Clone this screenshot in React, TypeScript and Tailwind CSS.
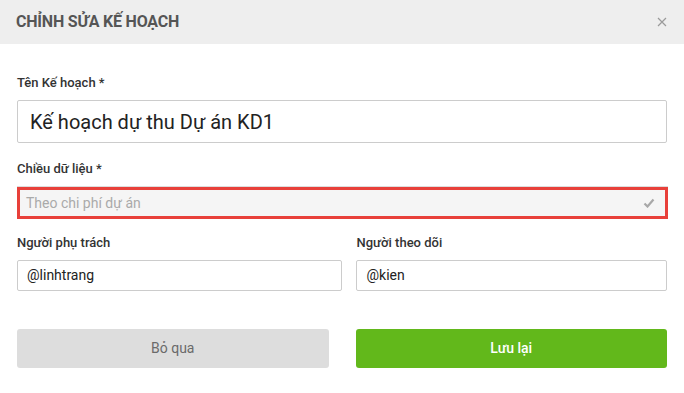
import React from "react";

export default function App() {
  return (
    <div className="w-[684px] h-[393px] bg-white overflow-hidden" style={{ fontFamily: "Roboto, 'Noto Sans', sans-serif" }}>
      <div className="h-[44px] bg-[#eeeeee] flex items-center justify-between pl-[16px] pr-[16px]">
        <div className="text-[16px] font-bold text-[#555555] tracking-[-0.2px]">CHỈNH SỬA KẾ HOẠCH</div>
        <svg width="10" height="10" viewBox="0 0 10 10" className="mr-[1px]">
          <path d="M1 1 L9 9 M9 1 L1 9" stroke="#9a9a9a" strokeWidth="1.2" />
        </svg>
      </div>
      <div className="px-[17px]">
        <div className="mt-[31px] text-[13px] leading-[16px] font-medium text-[#333333]">Tên Kế hoạch *</div>
        <div className="mt-[9px] h-[43px] w-[650px] border border-[#cccccc] rounded-[2px] flex items-center pl-[12px] text-[20px] text-[#222222]">
          Kế hoạch dự thu Dự án KD1
        </div>
        <div className="mt-[18px] text-[13px] leading-[16px] font-medium text-[#333333]">Chiều dữ liệu *</div>
        <div className="mt-[9px] w-[651px] border-t border-[#dddddd]">
          <div className="h-[32px] border-[3px] border-[#e8403a] bg-[#f5f5f5] flex items-center justify-between pl-[6px] pr-[10px]">
            <span className="text-[14px] text-[#aaaaaa]">Theo chi phí dự án</span>
            <svg width="12" height="10" viewBox="0 0 12 10">
              <path d="M1.5 5.5 L4.5 8.5 L10.5 1.5" stroke="#a8a8a8" strokeWidth="2.2" fill="none" />
            </svg>
          </div>
        </div>
        <div className="mt-[16px] flex gap-[14px]">
          <div className="w-[326px]">
            <div className="text-[13px] leading-[16px] font-medium text-[#333333]">Người phụ trách</div>
            <div className="mt-[9px] h-[31px] border border-[#cccccc] rounded-[2px] flex items-center pl-[9px] text-[14px] text-[#222222]">@linhtrang</div>
          </div>
          <div className="w-[311px]">
            <div className="text-[13px] leading-[16px] font-medium text-[#333333]">Người theo dõi</div>
            <div className="mt-[9px] h-[31px] border border-[#cccccc] rounded-[2px] flex items-center pl-[9px] text-[14px] text-[#222222]">@kien</div>
          </div>
        </div>
        <div className="mt-[38px] flex gap-[27px]">
          <div className="w-[312px] h-[39px] rounded-[3px] bg-[#dddddd] flex items-center justify-center text-[14px] text-[#6a6a6a]">Bỏ qua</div>
          <div className="w-[312px] h-[39px] rounded-[3px] bg-[#62b81b] flex items-center justify-center text-[14px] font-medium text-white">Lưu lại</div>
        </div>
      </div>
    </div>
  );
}
